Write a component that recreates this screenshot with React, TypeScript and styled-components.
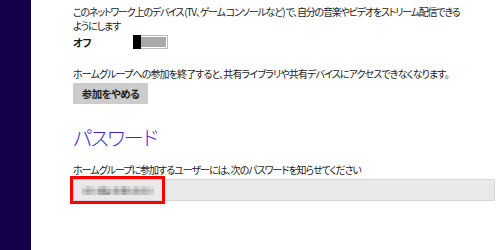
import React from "react";
import styled, { createGlobalStyle } from "styled-components";

const Global = createGlobalStyle`
  html, body { margin: 0; padding: 0; background: #ffffff; overflow: hidden; }
  body { font-family: "Noto Sans CJK JP", "Noto Sans", sans-serif; }
`;

const Page = styled.div`
  display: flex;
  width: 500px;
  height: 250px;
`;

const Sidebar = styled.div`
  width: 31px;
  flex: none;
  background: #15004a;
`;

const Main = styled.div`
  flex: 1;
  display: flex;
  flex-direction: column;
  align-items: flex-start;
  padding: 5px 0 0 42px;
  color: #1a1a1a;
  overflow: hidden;
`;

const Text = styled.p<{ $top?: number; $spacing?: number }>`
  margin: ${(p) => p.$top ?? 0}px 0 0 0;
  font-size: 10px;
  line-height: 14px;
  height: 14px;
  font-feature-settings: "palt";
  letter-spacing: ${(p) => p.$spacing ?? -1}px;
  white-space: nowrap;
`;

const ToggleRow = styled.div`
  display: flex;
  align-items: center;
  margin-top: 2px;
  height: 14px;
`;

const ToggleLabel = styled.span`
  flex: none;
  width: 60px;
  font-size: 10.5px;
  font-weight: 700;
  letter-spacing: -0.5px;
  font-feature-settings: "palt";
`;

const Track = styled.div`
  position: relative;
  flex: none;
  width: 35px;
  height: 14px;
  box-sizing: border-box;
  border: 1px solid #bcbcbc;
  padding: 1px;
  background: #ffffff;
`;

const TrackFill = styled.div`
  width: 100%;
  height: 100%;
  background: #a9a9a9;
`;

const Thumb = styled.div`
  position: absolute;
  left: -1px;
  top: -1px;
  width: 8px;
  height: 14px;
  background: #000000;
`;

const Button = styled.button`
  margin-top: 2px;
  width: 75px;
  height: 21px;
  border: none;
  padding: 0;
  background: #cccccc;
  color: #1a1a1a;
  font-family: inherit;
  font-size: 10.5px;
  font-weight: 700;
  letter-spacing: -0.6px;
  font-feature-settings: "palt";
`;

const Heading = styled.h2`
  margin: 21px 0 0 0;
  font-size: 20px;
  line-height: 26px;
  font-weight: 300;
  color: #4a1fc4;
  font-feature-settings: "palt";
  letter-spacing: -1.2px;
`;

const PasswordWrap = styled.div`
  position: relative;
  margin-top: 2px;
`;

const PasswordBox = styled.div`
  width: 422px;
  height: 22px;
  box-sizing: border-box;
  border: 1px solid #d6d6d6;
  background: #e9e9e9;
  display: flex;
  align-items: center;
  padding-left: 8px;
`;

const Highlight = styled.div`
  position: absolute;
  left: -3px;
  top: -3px;
  width: 95px;
  height: 28px;
  box-sizing: border-box;
  border: 3px solid #ff0000;
`;

const cells: number[][] = [
  [225, 200, 215, 230, 205, 190, 215, 225, 200, 215, 185, 210, 225, 200, 220, 205, 215, 225],
  [190, 170, 185, 200, 160, 150, 180, 195, 165, 185, 150, 175, 195, 170, 185, 180, 190, 200],
  [205, 185, 200, 210, 175, 165, 160, 205, 180, 195, 170, 190, 200, 185, 195, 190, 200, 210],
];

const Mosaic: React.FC = () => (
  <svg width="72" height="9" viewBox="0 0 72 9">
    {cells.map((row, r) =>
      row.map((v, c) => (
        <rect key={`${r}-${c}`} x={c * 4} y={r * 3} width="4" height="3" fill={`rgb(${v},${v},${v})`} />
      ))
    )}
  </svg>
);

export default function App() {
  return (
    <>
      <Global />
      <Page>
        <Sidebar />
        <Main>
          <Text $spacing={-1.2}>
            このネットワーク上のデバイス (TV、ゲーム コンソールなど) で、自分の音楽やビデオをストリーム配信できる
          </Text>
          <Text>ようにします</Text>
          <ToggleRow>
            <ToggleLabel>オフ</ToggleLabel>
            <Track>
              <TrackFill />
              <Thumb />
            </Track>
          </ToggleRow>
          <Text $top={18} $spacing={-0.87}>
            ホームグループへの参加を終了すると、共有ライブラリや共有デバイスにアクセスできなくなります。
          </Text>
          <Button>参加をやめる</Button>
          <Heading>パスワード</Heading>
          <Text $top={12}>ホームグループに参加するユーザーには、次のパスワードを知らせてください</Text>
          <PasswordWrap>
            <PasswordBox>
              <Mosaic />
            </PasswordBox>
            <Highlight />
          </PasswordWrap>
        </Main>
      </Page>
    </>
  );
}
